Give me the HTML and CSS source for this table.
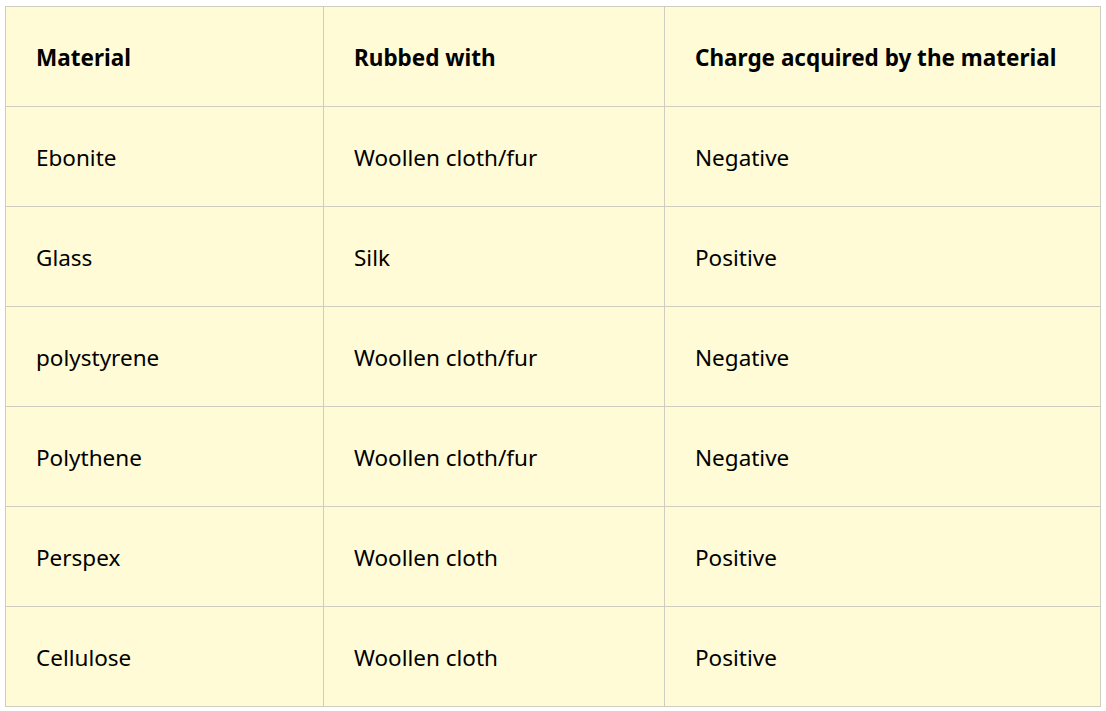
FILE: index.html
```html
<!DOCTYPE html>
<html>
<head>
<meta charset="utf-8">
<link rel="stylesheet" href="styles.css">
</head>
<body>
<div class="wrap">
<table class="charges">
<colgroup><col class="c1"><col class="c2"><col class="c3"></colgroup>
<thead>
<tr><th>Material</th><th>Rubbed with</th><th>Charge acquired by the material</th></tr>
</thead>
<tbody>
<tr><td>Ebonite</td><td>Woollen cloth/fur</td><td>Negative</td></tr>
<tr><td>Glass</td><td>Silk</td><td>Positive</td></tr>
<tr><td>polystyrene</td><td>Woollen cloth/fur</td><td>Negative</td></tr>
<tr><td>Polythene</td><td>Woollen cloth/fur</td><td>Negative</td></tr>
<tr><td>Perspex</td><td>Woollen cloth</td><td>Positive</td></tr>
<tr><td>Cellulose</td><td>Woollen cloth</td><td>Positive</td></tr>
</tbody>
</table>
</div>
</body>
</html>
```
FILE: styles.css
```css
html, body {
  margin: 0;
  padding: 0;
  background: #ffffff;
}
.wrap {
  padding: 6px 6px 0 5px;
}
.charges {
  border-collapse: collapse;
  width: 1095px;
  table-layout: fixed;
  background: #fffbd6;
  font-family: "Noto Sans", "Open Sans", sans-serif;
  font-size: 22.5px;
  color: #000;
}
.c1 { width: 318px; }
.c2 { width: 341px; }
.c3 { width: 436px; }
.charges th,
.charges td {
  border: 1px solid #cfcdc0;
  height: 100px;
  padding: 2px 0 0 30px;
  text-align: left;
  vertical-align: middle;
  box-sizing: border-box;
}
.charges th {
  font-weight: 700;
}
.charges td {
  font-weight: 400;
}
```
